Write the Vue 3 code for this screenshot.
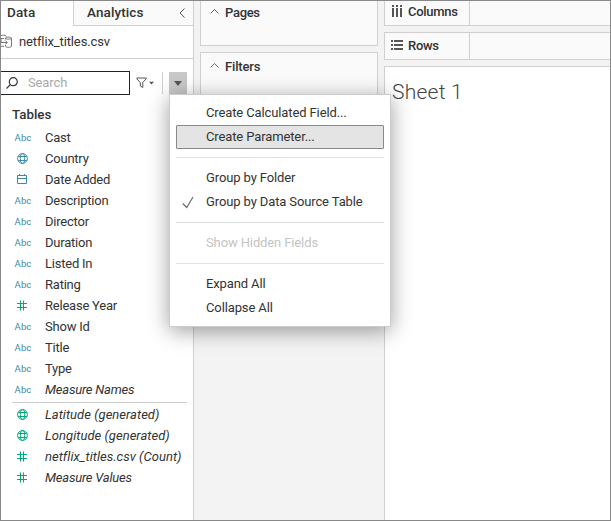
<script setup>
const fields = [
  { name: 'Cast', type: 'text' },
  { name: 'Country', type: 'globe' },
  { name: 'Date Added', type: 'date' },
  { name: 'Description', type: 'text' },
  { name: 'Director', type: 'text' },
  { name: 'Duration', type: 'text' },
  { name: 'Listed In', type: 'text' },
  { name: 'Rating', type: 'text' },
  { name: 'Release Year', type: 'number', measure: true },
  { name: 'Show Id', type: 'text' },
  { name: 'Title', type: 'text' },
  { name: 'Type', type: 'text' },
  { name: 'Measure Names', type: 'text', italic: true },
]
const measures = [
  { name: 'Latitude (generated)', type: 'globe', measure: true, italic: true, wide: true },
  { name: 'Longitude (generated)', type: 'globe', measure: true, italic: true, wide: true },
  { name: 'netflix_titles.csv (Count)', type: 'number', measure: true, italic: true, wide: true },
  { name: 'Measure Values', type: 'number', measure: true, italic: true },
]
const groups = [fields, measures]
const menu = [
  [{ label: 'Create Calculated Field...' }, { label: 'Create Parameter...', active: true }],
  [{ label: 'Group by Folder' }, { label: 'Group by Data Source Table', checked: true }],
  [{ label: 'Show Hidden Fields', disabled: true }],
  [{ label: 'Expand All' }, { label: 'Collapse All' }],
]
</script>

<template>
  <div class="window">
    <aside class="data-pane">
      <div class="tabs">
        <div class="tab selected">Data</div>
        <div class="tab other">
          <span>Analytics</span>
          <svg class="collapse" width="7" height="10" viewBox="0 0 7 10"><path d="M5.500 .5 1 5l4.500 4.500" /></svg>
        </div>
      </div>
      <div class="source">
        <svg class="source-icon" width="13" height="15" viewBox="0 0 13 15">
          <path d="M0 2C2 .8 5 .8 6.500 2.500M0 11.500c1.200.8 2.500 1 4 .8M1 4.500v4h6M5.300 6.500l2 2-2 2M1 4.500h3" />
          <path d="M5.500 5.500V4.200c0-1.400 6-1.400 6 0v8c0 1.500-6 1.500-6 0V11M5.500 4.300c0 1.100 6 1.100 6 0" />
        </svg>
        <span>netflix_titles.csv</span>
      </div>
      <div class="tools">
        <div class="search">
          <svg width="12" height="12" viewBox="0 0 12 12"><circle cx="7.300" cy="4.700" r="4" /><path d="M4.400 7.600.5 11.500" /></svg>
          <span>Search</span>
        </div>
        <svg class="funnel" width="19" height="12" viewBox="0 0 19 12">
          <path class="line" d="M.8 1h9.400v.8L6.800 5.500v5L4.300 9V5.500L.8 1.800z" />
          <path class="fill" d="M13 4.800h5L15.500 7.500z" />
        </svg>
        <div class="tool-divider"></div>
        <div class="drop"><svg width="8" height="5" viewBox="0 0 8 5"><path d="M0 0h8L4 5z" /></svg></div>
      </div>
      <h2>Tables</h2>
      <ul v-for="(group, g) in groups" :key="g" class="fields">
        <li v-for="f in group" :key="f.name" :class="{ measure: f.measure, italic: f.italic, wide: f.wide }">
          <span class="type">
            <span v-if="f.type === 'text'" class="abc">Abc</span>
            <svg v-else-if="f.type === 'globe'" width="11" height="11" viewBox="0 0 11 11">
              <circle cx="5.500" cy="5.500" r="4.900" /><ellipse cx="5.500" cy="5.500" rx="2.200" ry="4.900" /><path d="M1.200 3.500h8.600M1.200 7.500h8.600" />
            </svg>
            <svg v-else-if="f.type === 'date'" width="11" height="11" viewBox="0 0 11 11">
              <path d="M.5 1.500h9v8H.5zM.5 4.500h9M2.500 0v2M7.500 0v2" />
            </svg>
            <svg v-else width="11" height="11" viewBox="0 0 11 11"><path d="M3.500.5v10M6.500.5v10M0 3.500h10M0 7.500h10" /></svg>
          </span>
          <span class="name">{{ f.name }}</span>
        </li>
      </ul>
    </aside>

    <section class="cards">
      <div v-for="card in ['Pages', 'Filters']" :key="card" class="card" :class="card.toLowerCase()">
        <svg width="9" height="5" viewBox="0 0 9 5"><path d="M.5 4.500l4-4 4 4" /></svg>
        <span>{{ card }}</span>
      </div>
    </section>

    <main class="workspace">
      <div class="shelf columns">
        <div class="shelf-label">
          <svg width="12" height="12" viewBox="0 0 12 12"><path d="M1 0h2v2H1zM5 0h2v2H5zM9 0h2v2H9zM1 3h2v9H1zM5 3h2v9H5zM9 3h2v9H9z" /></svg>
          <span>Columns</span>
        </div>
      </div>
      <div class="shelf rows">
        <div class="shelf-label">
          <svg width="12" height="12" viewBox="0 0 12 12"><path d="M0 1h2v2H0zM0 5h2v2H0zM0 9h2v2H0zM3 1h9v2H3zM3 5h9v2H3zM3 9h9v2H3z" /></svg>
          <span>Rows</span>
        </div>
      </div>
      <div class="sheet">Sheet 1</div>
    </main>

    <div class="menu">
      <div v-for="(items, i) in menu" :key="i" class="menu-group">
        <div v-for="item in items" :key="item.label" class="menu-item" :class="{ active: item.active, disabled: item.disabled }">
          <svg v-if="item.checked" class="check" width="12" height="13" viewBox="0 0 12 13"><path d="M.7 7.500l4 4L11 1" /></svg>
          <span>{{ item.label }}</span>
        </div>
      </div>
    </div>
    <div class="frame"></div>
  </div>
</template>

<style>
body { margin: 0; overflow: hidden; }
</style>

<style scoped>
* { box-sizing: border-box; }
svg { display: block; flex: none; }
.window {
  position: relative;
  display: flex;
  width: 611px;
  height: 521px;
  overflow: hidden;
  background: #f3f3f3;
  color: #333;
  font: 13px/21px Roboto, "Liberation Sans", sans-serif;
  letter-spacing: -.12px;
  white-space: nowrap;
}
.frame { position: absolute; inset: 0; border: 1px solid #888; pointer-events: none; }
.data-pane { width: 194px; background: #fff; border-right: 1px solid #d0d0d0; }
.tabs { display: flex; height: 26px; font-weight: 500; font-size: 13.500px; letter-spacing: .1px; }
.tab { line-height: 25px; }
.selected { width: 73px; padding-left: 7px; }
.other {
  display: flex;
  flex: 1;
  align-items: center;
  justify-content: space-between;
  padding: 0 7px 0 13px;
  background: #fafafa;
  border-left: 1px solid #d0d0d0;
  border-bottom: 1px solid #d0d0d0;
}
.collapse { fill: none; stroke: #555; }
.source { display: flex; align-items: center; height: 33px; gap: 6px; border-bottom: 1px solid #d0d0d0; }
.source span { margin-top: -2px; }
.source-icon { margin-top: -2px; fill: none; stroke: #666; stroke-width: .9; }
.tools { display: flex; align-items: flex-start; margin-top: 12px; height: 24px; }
.search {
  display: flex;
  align-items: center;
  width: 130px;
  height: 24px;
  padding-left: 5px;
  border: 1px solid #222;
  color: #aaa;
}
.search svg { margin-right: 10px; fill: none; stroke: #333; stroke-width: 1.200; }
.search span { margin-top: -1px; }
.funnel { margin: 6px 0 0 6px; }
.funnel .line { fill: none; stroke: #555; }
.funnel .fill { fill: #555; }
.tool-divider { width: 1px; height: 22px; margin: 1px 6px 0 7px; background: #d0d0d0; }
.drop { display: flex; align-items: center; justify-content: center; width: 18px; height: 22px; margin-top: 1px; background: #c8c8c8; }
.drop svg { fill: #555; }
h2 { margin: 9px 0 2px 12px; font-size: 13.300px; font-weight: 500; line-height: 21px; letter-spacing: 0; }
.fields { margin: 0; padding: 0; list-style: none; }
.fields + .fields { margin: 2px 6px 0 12px; border-top: 1px solid #ccc; padding-top: 1px; }
.fields + .fields li { margin-left: -12px; }
.fields li { display: flex; align-items: center; height: 21px; color: #333; }
.name { letter-spacing: -.22px; }
.type { display: flex; justify-content: center; width: 45px; color: #3a8ba8; }
.measure .type { color: #00a67c; }
.type svg { fill: none; stroke: currentColor; }
.abc { font-size: 9.500px; letter-spacing: .1px; padding-left: 1px; }
.italic .name { font-style: italic; }
.wide .name { letter-spacing: .03px; }
.cards { display: flex; flex-direction: column; width: 190px; padding: 0 6px; gap: 6px; }
.card { display: flex; align-items: flex-start; padding-left: 9px; background: #fafafa; border: 1px solid #d0d0d0; }
.card svg { margin: 9px 6px 0 0; fill: none; stroke: #666; }
.card span { line-height: 26px; font-weight: 500; letter-spacing: -.3px; }
.pages { height: 46px; border-top: 0; }
.filters { height: 240px; }
.filters svg { margin-top: 10px; }
.card.filters span { line-height: 28px; letter-spacing: -.15px; }
.workspace { display: flex; flex: 1; flex-direction: column; }
.shelf { display: flex; margin-bottom: 6px; background: #fafafa; border: 1px solid #d0d0d0; border-right: 0; }
.shelf-label { display: flex; align-items: center; width: 85px; padding-left: 6px; gap: 5px; border-right: 1px solid #d0d0d0; font-weight: 500; letter-spacing: -.3px; }
.shelf-label svg { fill: #555; }
.columns { height: 26px; border-top: 0; }
.columns span { margin-top: -2px; }
.columns svg { margin-top: -3px; }
.rows { height: 28px; }
.rows svg { margin-top: -2px; }
.rows span { margin-top: -2px; }
.sheet {
  flex: 1;
  padding: 10px 7px;
  border: 1px solid #d0d0d0;
  border-right: 0;
  background: #fff;
  color: #444;
  font: 300 21px/30px Roboto, sans-serif;
  letter-spacing: .25px;
}
.menu {
  position: absolute;
  left: 169px;
  top: 94px;
  width: 222px;
  height: 233px;
  padding: 6px;
  border: 1px solid #ccc;
  background: #fff;
  box-shadow: 0 4px 20px rgba(0, 0, 0, .38);
}
.menu-group + .menu-group { margin-top: 8px; padding-top: 8px; border-top: 1px solid #e2e2e2; }
.menu-item { position: relative; height: 24px; padding-left: 30px; line-height: 23px; }
.menu-item.active { line-height: 21px; padding-left: 29px; border: 1px solid #888; border-radius: 1px; background: #e4e4e4; }
.menu-item.disabled { color: #c4c4c4; }
.check { position: absolute; left: 6px; top: 6px; fill: none; stroke: #666; stroke-width: 1.100; }
</style>
